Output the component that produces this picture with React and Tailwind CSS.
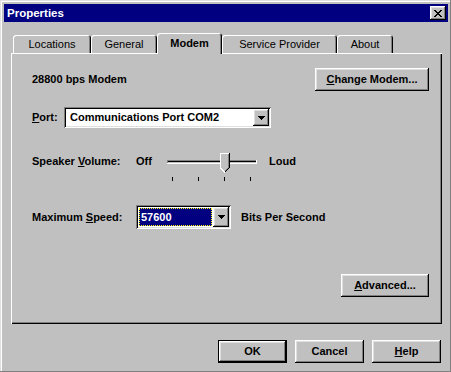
import React from 'react';

const raised = 'shadow-[inset_-1px_-1px_#000,inset_1px_1px_#fff,inset_-2px_-2px_#808080,inset_2px_2px_#dfdfdf]';
const sunken = 'shadow-[inset_1px_1px_#808080,inset_-1px_-1px_#fff,inset_2px_2px_#000,inset_-2px_-2px_#dfdfdf]';

function Arrow() {
  return (
    <svg width="7" height="4" viewBox="0 0 7 4">
      <path d="M0 0h7v1H6v1H5v1H4v1H3V3H2V2H1V1H0z" fill="#000" />
    </svg>
  );
}

function Button({ className = '', children, isDefault }) {
  const edge = isDefault
    ? 'shadow-[inset_0_0_0_1px_#000,inset_-2px_-2px_#000,inset_2px_2px_#fff,inset_-3px_-3px_#808080,inset_3px_3px_#dfdfdf]'
    : raised;
  return (
    <div className={`h-[23px] flex items-center justify-center bg-[#c0c0c0] font-bold ${edge} ${className}`}>
      {children}
    </div>
  );
}

function Tab({ label, width, active }) {
  if (active) {
    return (
      <div
        className={`relative z-10 -mb-[1px] h-[21px] ${width} flex items-start justify-center pt-[4px] font-bold bg-[#c0c0c0] rounded-t-[3px] shadow-[inset_1px_1px_#fff,inset_-1px_0_#000,inset_-2px_0_#808080]`}
      >
        {label}
      </div>
    );
  }
  return (
    <div
      className={`h-[18px] ${width} flex items-center justify-center bg-[#c0c0c0] rounded-t-[3px] shadow-[inset_1px_1px_#fff,inset_-1px_0_#000,inset_-2px_0_#808080]`}
    >
      {label}
    </div>
  );
}

function Slider() {
  return (
    <svg width="92" height="32" viewBox="0 0 92 32" shapeRendering="crispEdges">
      <rect x="0" y="10" width="90" height="1" fill="#808080" />
      <rect x="0" y="11" width="1" height="3" fill="#808080" />
      <rect x="1" y="11" width="88" height="1" fill="#000" />
      <rect x="1" y="12" width="88" height="1" fill="#c0c0c0" />
      <rect x="0" y="13" width="90" height="1" fill="#fff" />
      <rect x="89" y="10" width="1" height="4" fill="#fff" />
      {/* thumb */}
      <path d="M53 3h10v15l-5 5l-5-5z" fill="#c0c0c0" />
      <rect x="53" y="3" width="9" height="1" fill="#fff" />
      <rect x="53" y="3" width="1" height="15" fill="#fff" />
      <path d="M53.5 18l4.5 4.5" stroke="#fff" />
      <rect x="62" y="3" width="1" height="15" fill="#000" />
      <rect x="61" y="4" width="1" height="14" fill="#808080" />
      <path d="M62.5 17.5l-5 5" stroke="#000" />
      <path d="M61.5 17.5l-4 4" stroke="#808080" />
      {[5, 31, 57, 83].map((x) => (
        <rect key={x} x={x} y="27" width="1" height="4" fill="#000" />
      ))}
    </svg>
  );
}

export default function App() {
  return (
    <div
      className="w-[451px] h-[372px] bg-[#c0c0c0] text-black text-[11px] leading-[13px] pt-[4px] pl-[4px] pr-[3px] shadow-[inset_-1px_-1px_#808080,inset_1px_1px_#dfdfdf,inset_2px_2px_#fff] overflow-hidden"
      style={{ fontFamily: '"Liberation Sans", Arial, sans-serif' }}
    >
      {/* title bar */}
      <div className="h-[18px] bg-[#000080] flex items-center justify-between pl-[3px] pr-[2px]">
        <span className="text-white font-bold text-[11.5px]">Properties</span>
        <div className={`w-[16px] h-[14px] bg-[#c0c0c0] flex items-center justify-center ${raised}`}>
          <svg width="8" height="7" viewBox="0 0 8 7" shapeRendering="crispEdges">
            <path d="M0 0h2v1h1v1h2V1h1V0h2v1H7v1H6v1H5v1h1v1h1v1h1v1H6V6H5V5H3v1H2v1H0V6h1V5h1V4h1V3H2V2H1V1H0z" fill="#000" />
          </svg>
        </div>
      </div>

      <div className="-ml-[4px]">
        {/* tabs */}
        <div className="mt-[11px] ml-[13px] h-[20px] flex items-end">
          <Tab label="Locations" width="w-[78px]" />
          <Tab label="General" width="w-[66px]" />
          <Tab label="Modem" width="w-[65px]" active />
          <Tab label="Service Provider" width="w-[115px]" />
          <Tab label="About" width="w-[56px]" />
        </div>

        {/* panel */}
        <div className="ml-[11px] w-[431px] h-[271px] pl-[21px] pr-[13px] pt-[15px] flex flex-col shadow-[inset_1px_1px_#fff,inset_-1px_-1px_#000,inset_-2px_-2px_#808080]">
          <div className="flex items-center justify-between h-[23px]">
            <span className="font-bold">28800 bps Modem</span>
            <Button className="w-[114px]">
              <span><u>C</u>hange Modem...</span>
            </Button>
          </div>

          <div className="mt-[16px] flex items-center h-[21px]">
            <span className="font-bold w-[32px]"><u>P</u>ort:</span>
            <div className={`w-[207px] h-[21px] bg-white p-[2px] flex ${sunken}`}>
              <div className="flex-1 flex items-center pl-[4px] font-bold">Communications Port COM2</div>
              <div className={`w-[16px] h-[17px] bg-[#c0c0c0] flex items-center justify-center ${raised}`}>
                <Arrow />
              </div>
            </div>
          </div>

          <div className="mt-[22px] flex items-start h-[32px] font-bold">
            <span className="w-[104px] mt-[5px]">Speaker <u>V</u>olume:</span>
            <span className="w-[31px] mt-[5px]">Off</span>
            <Slider />
            <span className="ml-[10px] mt-[5px]">Loud</span>
          </div>

          <div className="mt-[23px] flex items-center h-[24px] font-bold">
            <span className="w-[104px]">Maximum <u>S</u>peed:</span>
            <div className={`w-[95px] h-[24px] bg-white p-[2px] flex ${sunken}`}>
              <div className="flex-1 p-[1px] flex">
                <div className="flex-1 bg-[#000080] text-white flex items-center pl-[2px] outline-1 outline-dotted outline-[#ffff00] -outline-offset-1">
                  57600
                </div>
              </div>
              <div className={`w-[16px] h-[20px] bg-[#c0c0c0] flex items-center justify-center ${raised}`}>
                <Arrow />
              </div>
            </div>
            <span className="ml-[10px]">Bits Per Second</span>
          </div>

          <div className="mt-[45px] flex justify-end">
            <Button className="w-[88px]">
              <span><u>A</u>dvanced...</span>
            </Button>
          </div>
        </div>

        {/* footer buttons */}
        <div className="mt-[16px] pr-[7px] flex justify-end gap-[8px]">
          <Button className="w-[69px]" isDefault>OK</Button>
          <Button className="w-[69px]">Cancel</Button>
          <Button className="w-[69px]"><span><u>H</u>elp</span></Button>
        </div>
      </div>
    </div>
  );
}
